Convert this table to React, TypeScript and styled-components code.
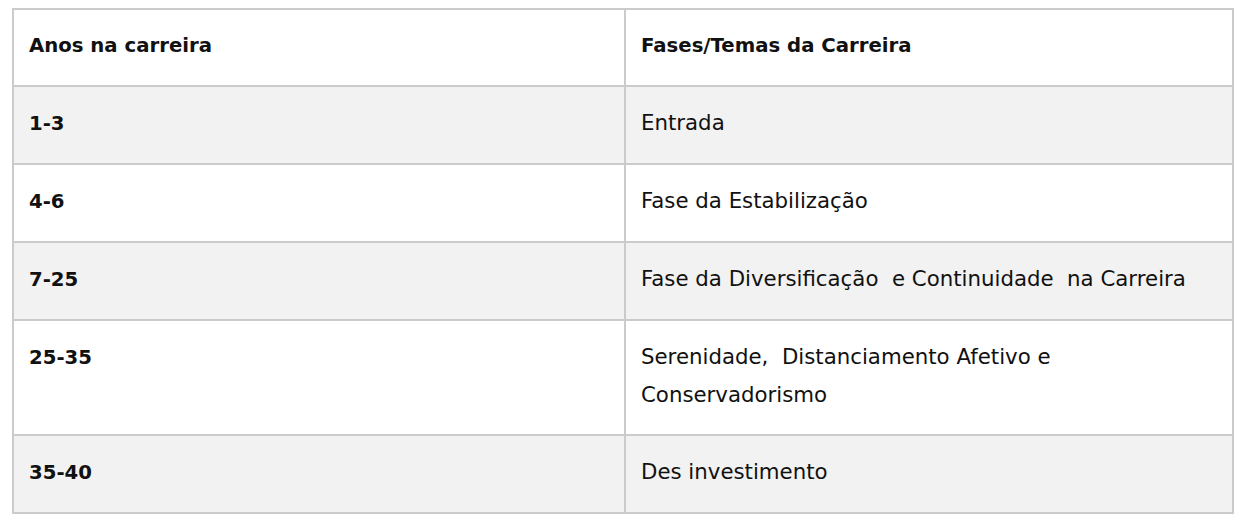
import React from 'react'
import styled, { createGlobalStyle } from 'styled-components'

const GlobalStyle = createGlobalStyle`
  body {
    margin: 0;
    background: #fff;
    font-family: "DejaVu Sans", Verdana, sans-serif;
  }
`

const Page = styled.div`
  padding: 8px 20px 0 12px;
`

const Table = styled.table`
  width: 1222px;
  border-collapse: collapse;
  table-layout: fixed;
  border: 2px solid #cbcbcb;
`

const Row = styled.tr<{ $striped?: boolean }>`
  background: ${(p) => (p.$striped ? '#f2f2f2' : '#fff')};
`

const Cell = styled.td<{ $bold?: boolean }>`
  border: 2px solid #cbcbcb;
  padding: 17px 15px 20px;
  font-size: ${(p) => (p.$bold ? '19.7px' : '21.3px')};
  line-height: 38px;
  color: #111;
  font-weight: ${(p) => (p.$bold ? 700 : 400)};
  vertical-align: baseline;
  text-align: left;
`

const HeadCell = styled(Cell).attrs({ as: 'th' })``

const rows = [
  { years: '1-3', phase: 'Entrada' },
  { years: '4-6', phase: 'Fase da Estabilização' },
  { years: '7-25', phase: 'Fase da Diversificação  e Continuidade  na Carreira' },
  { years: '25-35', phase: 'Serenidade,  Distanciamento Afetivo e Conservadorismo' },
  { years: '35-40', phase: 'Des investimento' },
]

const App = () => {
  return (
    <Page>
      <GlobalStyle />
      <Table>
        <colgroup>
          <col style={{ width: 612 }} />
          <col />
        </colgroup>
        <thead>
          <Row>
            <HeadCell $bold>Anos na carreira</HeadCell>
            <HeadCell $bold>Fases/Temas da Carreira</HeadCell>
          </Row>
        </thead>
        <tbody>
          {rows.map((r, i) => (
            <Row key={r.years} $striped={i % 2 === 0}>
              <Cell $bold>{r.years}</Cell>
              <Cell style={{ whiteSpace: 'pre-wrap', paddingRight: i === 3 ? 170 : 15 }}>{r.phase}</Cell>
            </Row>
          ))}
        </tbody>
      </Table>
    </Page>
  )
}

export default App
